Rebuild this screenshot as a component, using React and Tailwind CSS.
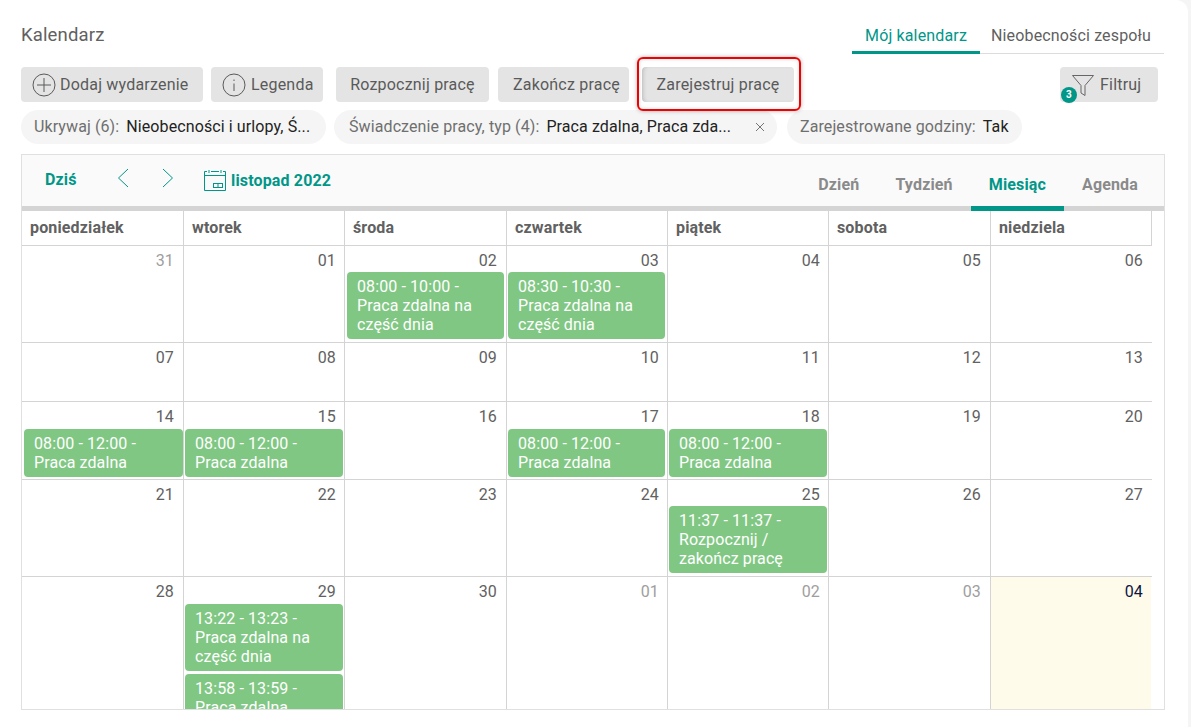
import React from "react";

const cols = ["w-[161px]", "w-[161px]", "w-[162px]", "w-[161px]", "w-[161px]", "w-[162px]", "w-[161px]"];
const numPad = ["pr-[9px]", "pr-[8px]", "pr-[9px]", "pr-[8px]", "pr-[8px]", "pr-[9px]", "pr-[8px]"];
const evMargin = ["ml-[2px] mr-0", "ml-[1px] mr-[1px]", "ml-[2px] mr-[2px]", "ml-[1px] mr-[2px]", "ml-[1px] mr-[1px]", "", ""];
const heads = ["poniedziałek", "wtorek", "środa", "czwartek", "piątek", "sobota", "niedziela"];

const rows = [
  { h: "h-[97px]", top: "h-[26px]", cells: [
    { n: "31", muted: true }, { n: "01" },
    { n: "02", ev: [["08:00 - 10:00 -", "Praca zdalna na", "część dnia"]] },
    { n: "03", ev: [["08:30 - 10:30 -", "Praca zdalna na", "część dnia"]] },
    { n: "04" }, { n: "05" }, { n: "06" },
  ]},
  { h: "h-[59px]", top: "h-[26px]", cells: [{ n: "07" }, { n: "08" }, { n: "09" }, { n: "10" }, { n: "11" }, { n: "12" }, { n: "13" }] },
  { h: "h-[78px]", top: "h-[27px]", cells: [
    { n: "14", ev: [["08:00 - 12:00 -", "Praca zdalna"]] },
    { n: "15", ev: [["08:00 - 12:00 -", "Praca zdalna"]] },
    { n: "16" },
    { n: "17", ev: [["08:00 - 12:00 -", "Praca zdalna"]] },
    { n: "18", ev: [["08:00 - 12:00 -", "Praca zdalna"]] },
    { n: "19" }, { n: "20" },
  ]},
  { h: "h-[97px]", top: "h-[26px]", cells: [
    { n: "21" }, { n: "22" }, { n: "23" }, { n: "24" },
    { n: "25", ev: [["11:37 - 11:37 -", "Rozpocznij /", "zakończ pracę"]] },
    { n: "26" }, { n: "27" },
  ]},
  { h: "h-[133px]", top: "h-[27px]", cells: [
    { n: "28" },
    { n: "29", ev: [["13:22 - 13:23 -", "Praca zdalna na", "część dnia"], ["13:58 - 13:59 -", "Praca zdalna"]] },
    { n: "30" }, { n: "01", muted: true }, { n: "02", muted: true }, { n: "03", muted: true },
    { n: "04", today: true },
  ]},
];

function Btn({ className = "", children }) {
  return (
    <button className={`h-[35px] rounded-[4px] bg-[#e4e4e4] text-[16px] tracking-[0.2px] font-normal text-[#5a5a5a] flex items-center ${className}`}>
      {children}
    </button>
  );
}

function Chip({ label, value, close, className = "" }) {
  return (
    <div className={`h-[34px] rounded-full bg-[#f5f5f5] flex items-center text-[16px] tracking-[0.1px] whitespace-nowrap ${className}`}>
      <span className="text-[#6f6f6f] mr-[7px]">{label}</span>
      <span className="text-[#222222]">{value}</span>
      {close && (
        <svg className="ml-auto" width="10" height="10" viewBox="0 0 10 10" fill="none" stroke="#757575" strokeWidth="1">
          <path d="M1 1l8 8M9 1l-8 8" />
        </svg>
      )}
    </div>
  );
}

function Event({ lines, margin, idx }) {
  return (
    <div className={`${idx === 0 ? "" : "mt-[3px]"} ${margin} rounded-[4px] bg-[#81c784] px-[10px] py-[5px] text-[16px] leading-[19px] tracking-[0.1px] text-white`}>
      {lines.map((l) => <div key={l}>{l}</div>)}
    </div>
  );
}

export default function App() {
  return (
    <div className="h-[727px] overflow-hidden bg-[#f5f5f5] font-['Roboto',sans-serif] tracking-[0.15px]">
      <div className="w-[1188px] h-[727px] bg-white rounded-tr-[12px] pl-[21px] relative">
        {/* title row */}
        <div className="w-[1143px] h-[54px] pt-[23px] flex items-start justify-between">
          <h1 className="text-[18.5px] leading-[24px] font-normal text-[#616161]">Kalendarz</h1>
          <div className="flex items-end h-[31px] border-b border-[#dcdcdc]">
            <div className="w-[128px] h-[31px] -mb-[1px] border-b-[3px] border-[#009688] text-center text-[16px] leading-[26px] text-[#009688]">Mój kalendarz</div>
            <div className="w-[184px] h-[30px] text-[16px] leading-[26px] text-[#5f5f5f] pl-[11px]">Nieobecności zespołu</div>
          </div>
        </div>

        {/* actions */}
        <div className="w-[1137px] mt-[13px] flex items-center">
          <Btn className="w-[182px] pl-[11px]">
            <svg className="mr-[4px]" width="24" height="24" viewBox="0 0 24 24" fill="none" stroke="#5a5a5a" strokeWidth="1">
              <circle cx="12" cy="12" r="11" /><path d="M12 5v14M5 12h14" />
            </svg>
            Dodaj wydarzenie
          </Btn>
          <Btn className="w-[112px] ml-[8px] pl-[11px]">
            <svg className="mr-[5px]" width="24" height="24" viewBox="0 0 24 24" fill="none" stroke="#5a5a5a" strokeWidth="1">
              <circle cx="12" cy="12" r="11" /><path d="M12 10.5v7.5M12 6.5v1.5" />
            </svg>
            Legenda
          </Btn>
          <Btn className="w-[153px] ml-[13px] justify-center">Rozpocznij pracę</Btn>
          <Btn className="w-[131px] ml-[9px] pl-[15px]">Zakończ pracę</Btn>
          <Btn className="w-[152px] ml-[13px] justify-center shadow-[inset_3px_0_4px_-2px_rgba(0,0,0,0.18)]">Zarejestruj pracę</Btn>
          <Btn className="w-[98px] ml-auto pl-[11px] relative">
            <svg className="mr-[5px]" width="24" height="24" viewBox="0 0 24 24" fill="none" stroke="#666666" strokeWidth="1">
              <path d="M1.5 2.5h21l-8.5 10v10l-4-2.5v-7.5z" strokeLinejoin="round" />
            </svg>
            Filtruj
            <span className="absolute left-[1px] top-[20px] w-[16px] h-[16px] rounded-full bg-[#009688] text-white text-[10px] font-bold leading-[16px] text-center">3</span>
          </Btn>
        </div>
        {/* highlight annotation */}
        <div className="absolute left-[637px] top-[57px] w-[164px] h-[54px] rounded-[6px] border-2 border-[#f00000] shadow-[0_0_4px_rgba(0,0,0,0.3),inset_0_0_4px_rgba(0,0,0,0.12)] pointer-events-none" />

        {/* chips */}
        <div className="mt-[8px] flex">
          <Chip className="w-[305px] pl-[13px]" label="Ukrywaj (6):" value="Nieobecności i urlopy, Ś..." />
          <Chip className="w-[443px] ml-[8px] pl-[15px] pr-[12px]" label="Świadczenie pracy, typ (4):" value="Praca zdalna, Praca zda..." close />
          <Chip className="w-[235px] ml-[10px] pl-[13px]" label="Zarejestrowane godziny:" value="Tak" />
        </div>

        {/* calendar */}
        <div className="mt-[10px] w-[1144px] h-[556px] border border-[#e0e0e0] overflow-hidden">
          <div className="h-[51px] bg-[#fafafa] flex items-start">
            <span className="ml-[23px] mt-[15px] w-[32px] text-[16px] leading-[20px] font-bold text-[#009688]">Dziś</span>
            <svg className="ml-[40px] mt-[13px]" width="12" height="20" viewBox="0 0 12 20" fill="none" stroke="#009688" strokeWidth="1">
              <path d="M11 1L1.5 10l9.5 9" />
            </svg>
            <svg className="ml-[33px] mt-[13px]" width="12" height="20" viewBox="0 0 12 20" fill="none" stroke="#009688" strokeWidth="1">
              <path d="M1 1l9.5 9L1 19" />
            </svg>
            <svg className="ml-[30px] mt-[14px]" width="22" height="22" viewBox="0 0 22 22" fill="none" stroke="#009688" strokeWidth="1">
              <path d="M3 2.5H.5v19h21v-19H19M7 2.5h8M.5 6.5h21" />
              <path d="M5 1v3M17 1v3" />
              <rect x="9.5" y="14.5" width="9" height="4" />
              <path d="M14 14.5v4" />
            </svg>
            <span className="ml-[5px] mt-[16px] text-[16px] leading-[20px] font-bold text-[#009688]">listopad 2022</span>
            <div className="ml-auto mr-[8px] flex h-[51px] text-[16px] leading-[20px] font-bold text-[#8a8a8a]">
              <div className="px-[18px] pt-[20px]">Dzień</div>
              <div className="px-[18px] pt-[20px]">Tydzień</div>
              <div className="px-[18px] pt-[20px] text-[#009688]">Miesiąc</div>
              <div className="px-[18px] pt-[20px]">Agenda</div>
            </div>
          </div>
          <div className="h-[5px] bg-[#d4d4d4] relative">
            <div className="absolute left-[949px] top-0 w-[93px] h-[5px] bg-[#009688]" />
          </div>

          {/* head row */}
          <div className="flex w-[1130px] h-[34px] border-r border-[#d4d4d4]">
            {heads.map((h, i) => (
              <div key={h} className={`${cols[i]} ${i ? "border-l border-[#d4d4d4]" : ""} pl-[8px] text-[16px] leading-[33px] font-bold text-[#616161]`}>{h}</div>
            ))}
          </div>

          {rows.map((r, ri) => (
            <div key={ri} className={`flex w-[1130px] ${r.h} border-t border-[#d4d4d4] overflow-hidden`}>
              {r.cells.map((c, i) => (
                <div key={i} className={`${cols[i]} ${i ? "border-l border-[#d4d4d4]" : ""} ${c.today ? "bg-[#fffbeb]" : ""} overflow-hidden`}>
                  <div className={`${numPad[i]} ${r.top} pt-[5px] text-right text-[16px] leading-[20px] ${c.today ? "text-[#0d1440]" : c.muted ? "text-[#9e9e9e]" : "text-[#616161]"}`}>{c.n}</div>
                  {c.ev && c.ev.map((lines, k) => <Event key={k} lines={lines} idx={k} margin={evMargin[i]} />)}
                </div>
              ))}
            </div>
          ))}
        </div>
      </div>
    </div>
  );
}
